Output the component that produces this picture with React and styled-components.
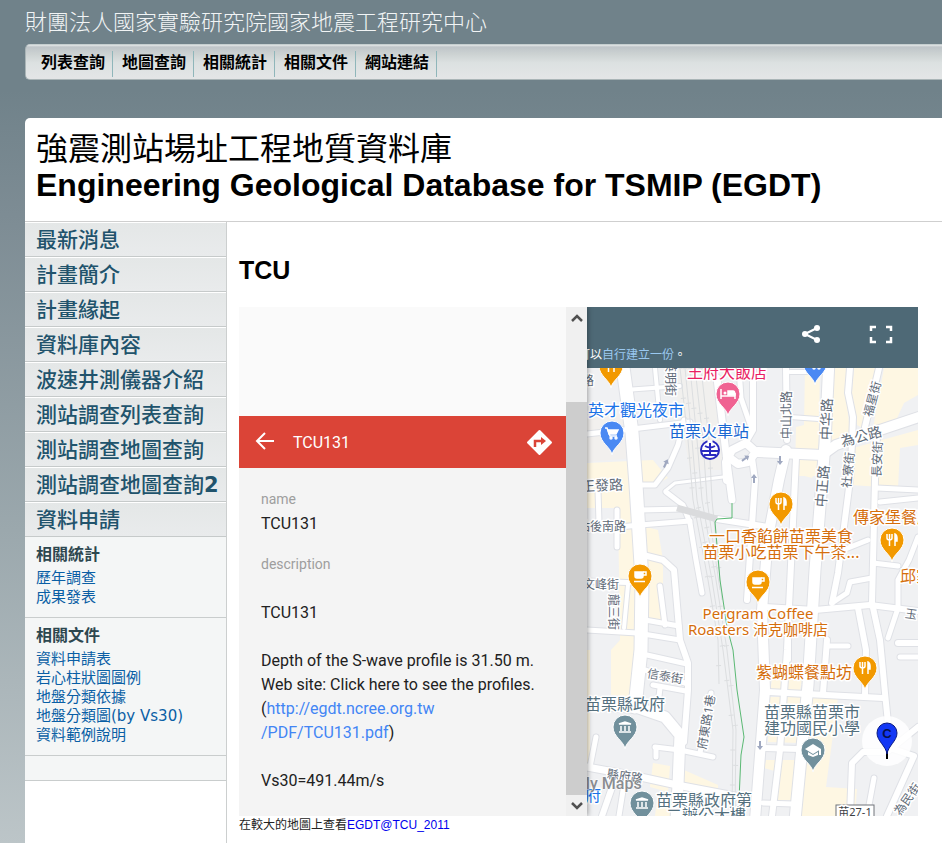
import React from "react";
import styled, { createGlobalStyle } from "styled-components";

const cjk = `"Liberation Sans", "Noto Sans CJK TC", sans-serif`;
const verdana = `"DejaVu Sans", "Noto Sans CJK TC", sans-serif`;
const roboto = `Roboto, "Noto Sans CJK TC", sans-serif`;

const GlobalStyle = createGlobalStyle`
  * { box-sizing: border-box; }
  html { background: #bcc5c8; }
  body {
    margin: 0;
    font-family: ${cjk};
    background: linear-gradient(#70828a 0, #70828a 90px, #7d8c94 215px, #9ba8ad 530px, #bcc5c8 843px);
  }
  h1, h2, h3, p, ul, dl { margin: 0; padding: 0; }
  ul { list-style: none; }
  a { text-decoration: none; }
  button { border: 0; padding: 0; background: none; cursor: pointer; }
`;

const Page = styled.div`
  min-height: 100vh;
  padding-left: 25px;
  display: flex;
  flex-direction: column;
  overflow: hidden;
`;

const Organisation = styled.p`
  padding-top: 7px;
  height: 44px;
  font-size: 22px;
  line-height: 32px;
  font-weight: 300;
  color: #f1f4f5;
  white-space: nowrap;
`;

const TopNav = styled.nav`
  height: 36px;
  padding: 6px 0 0 6px;
  border: 1px solid #aab5b7;
  border-top-color: #c6cfd0;
  border-right: 0;
  border-radius: 5px 0 0 5px;
  background: linear-gradient(#e4e8e8 0, #bfc5c9 2px, #ccd2d2 9px, #dce1e1 18px, #e3e5e6 32px);
`;

const TopList = styled.ul`
  display: flex;
`;

const TopItem = styled.li`
  width: 81px;
  height: 26px;
  padding-left: 9px;
  border-right: 1px solid #8fb6ba;
`;

const TopLink = styled.a`
  font-size: 16px;
  line-height: 24px;
  font-weight: 700;
  color: #000;
  white-space: nowrap;
`;

const Sheet = styled.div`
  flex: 1;
  display: flex;
  flex-direction: column;
  margin-top: 38px;
  background: #fff;
  border-top-left-radius: 5px;
`;

const Masthead = styled.header`
  padding: 13px 11px 18px;
  border-bottom: 1px solid #cfcfcf;
  color: #000;
  white-space: nowrap;
`;

const Title = styled.h1`
  font-size: 32px;
  line-height: 36px;
  font-weight: 700;
`;

const TitleNative = styled.span`
  display: block;
  font-weight: 400;
`;

const Columns = styled.div`
  flex: 1;
  display: grid;
  grid-template-columns: 202px minmax(0, 1fr);
`;

const Sidebar = styled.aside`
  border-right: 1px solid #cccfcf;
  font-family: ${verdana};
`;

const MenuItem = styled.li`
  height: 35px;
  padding-left: 11px;
  border-top: 1px solid #fff;
  border-bottom: 1px solid #c6caca;
  background: linear-gradient(#e4e7e7, #e9ebec);
`;

const MenuLink = styled.a`
  font-size: 21px;
  line-height: 35px;
  font-weight: 500;
  color: #21536c;
  white-space: nowrap;
`;

const Section = styled.section`
  min-height: 25px;
  padding: ${(p) => (p.$blank ? "0" : "6px 11px 10px")};
  border-bottom: 1px solid #c9cdcd;
  background: #f4f6f6;
`;

const SectionTitle = styled.h3`
  margin-bottom: 2px;
  font-size: 16px;
  line-height: 24px;
  color: #2d474f;
`;

const SectionItem = styled.li`
  font-size: 15px;
  line-height: 19px;
  white-space: nowrap;
`;

const SectionLink = styled.a`
  color: #0a5fa5;
`;

const Main = styled.main`
  padding: 33px 24px 10px 12px;
`;

const StationTitle = styled.h2`
  margin-bottom: 22px;
  font-size: 25px;
  line-height: 30px;
`;

const Embed = styled.div`
  position: relative;
  display: flex;
  flex-direction: column;
  height: 509px;
  overflow: hidden;
  font-family: ${roboto};
`;

const MapBar = styled.div`
  flex: none;
  height: 61px;
  padding: 0 25px 0 339px;
  display: flex;
  justify-content: space-between;
  background: #4e6976;
  color: #fff;
`;

const Notice = styled.p`
  align-self: flex-end;
  font-size: 12px;
  line-height: 26px;
  white-space: nowrap;
`;

const NoticeLink = styled.a`
  color: #9ac8f0;
`;

const MapTools = styled.div`
  display: flex;
  gap: 46px;
  padding-top: 15px;
`;

const ToolButton = styled.button`
  width: 24px;
  height: 24px;
  color: #fff;
`;

const MapCanvas = styled.svg`
  display: block;
  flex: 1;
  width: 100%;
  min-height: 0;
  background: #f0f1f3;
`;

const Panel = styled.div`
  position: absolute;
  inset: 0 auto 0 0;
  width: 348px;
  display: grid;
  grid-template-columns: 1fr 21px;
  box-shadow: 1px 0 5px rgba(0, 0, 0, 0.35);
`;

const Card = styled.div`
  display: flex;
  flex-direction: column;
  padding-top: 109px;
  background: #fafafa;
`;

const CardHeader = styled.div`
  display: flex;
  align-items: center;
  height: 52px;
  padding: 0 13px 0 14px;
  gap: 16px;
  background: #db4437;
  color: #fff;
  font-size: 16px;
`;

const CardTitle = styled.span`
  flex: 1;
`;

const IconButton = styled.button`
  width: ${(p) => p.$size}px;
  height: ${(p) => p.$size}px;
  color: #fff;
`;

const Fields = styled.dl`
  flex: 1;
  padding: 21px 22px 0;
  background: #f4f4f4;
  color: #212121;
`;

const FieldName = styled.dt`
  margin-bottom: 3px;
  font-size: 14px;
  line-height: 20px;
  color: #9e9e9e;
`;

const FieldValue = styled.dd`
  margin: 0 0 18px;
  font-size: 16px;
  line-height: 24px;
  white-space: pre-line;
`;

const FieldLink = styled.a`
  color: #4285f4;
`;

const Scrollbar = styled.div`
  display: flex;
  flex-direction: column;
  background: #f0f0f0;
`;

const ScrollButton = styled.button`
  height: 21px;
  display: grid;
  place-items: center;
`;

const Thumb = styled.div`
  flex: 1;
  margin-top: 74px;
  background: #cdcdcd;
`;

const Caption = styled.p`
  font-size: 12px;
  line-height: 18px;
  color: #222;
`;

const CaptionLink = styled.a`
  color: #0000ee;
`;

const Icon = styled.svg`
  display: block;
`;

const Halo = styled.text`
  font-family: "Noto Sans", "Noto Sans CJK TC", sans-serif;
  font-size: ${(p) => p.$size || 16}px;
  fill: ${(p) => p.$color || "#5f6b78"};
  stroke: #fff;
  stroke-width: 3px;
  stroke-linejoin: round;
  paint-order: stroke;
  text-anchor: ${(p) => p.$anchor || "start"};
`;

const Watermark = styled.text`
  font-family: ${roboto};
  font-size: 16px;
  font-weight: 500;
  fill: #8a8d91;
  stroke: #fff;
  stroke-width: 1px;
  paint-order: stroke;
`;

const topLinks = ["列表查詢", "地圖查詢", "相關統計", "相關文件", "網站連結"];
const menu = [
  "最新消息", "計畫簡介", "計畫緣起", "資料庫內容", "波速井測儀器介紹",
  "測站調查列表查詢", "測站調查地圖查詢", "測站調查地圖查詢2", "資料申請",
];
const sections = [
  { title: "相關統計", links: ["歷年調查", "成果發表"] },
  { title: "相關文件", links: ["資料申請表", "岩心柱狀圖圖例", "地盤分類依據", "地盤分類圖(by Vs30)", "資料範例說明"] },
];

const blocks = [
  "587,463 653,460 668,478 655,485 634,486 636,508 587,508",
  "618,508 636,508 641,560 641,640 634,697 611,695 611,650 620,640",
  "646,527 658,530 663,560 663,627 646,622",
  "653,763 670,766 668,792 650,787",
  "684,770 718,785 718,792 684,788",
  "657,800 672,800 670,816 655,816",
  "587,650 590,650 590,770 587,770",
  "805,368 820,368 818,476 795,476 796,427 804,425",
  "833,368 849,368 846,395 850,432 831,444",
  "854,368 876,368 862,428 857,425 852,393",
  "884,368 918,368 918,395 904,403 893,427 873,428",
  "853,448 918,430 918,445 900,448 898,488 850,485",
  "797,470 816,470 812,478 797,474",
  "772,680 802,680 800,690 770,690",
  "770,697 802,697 800,743 768,742",
  "766,760 798,760 794,800 778,800 778,772 764,768",
  "812,697 838,697 826,787 857,789 855,816 800,816",
];

const minorRoads = [
  [5, "587,434 632,429 690,422"],
  [4, "625,390 680,386"], [4, "628,409 660,407"], [4, "655,368 660,420"],
  [5, "587,530 640,525 690,521"],
  [5, "640,510 685,509"], [5, "617,510 617,547"], [5, "598,490 599,523"],
  [5, "587,581 640,583"], [4, "628,585 624,628"],
  [5, "587,630 637,633 680,640"],
  [5, "645,620 679,626"], [5, "660,586 665,625"],
  [6, "643,555 663,560 674,570 680,640 688,663 688,690 684,742"],
  [5, "633,485 655,485 668,468 678,445 684,420"],
  [3, "665,491 675,483 723,477"], [5, "666,492 683,505 690,523 696,560 702,593"],
  [5, "647,655 687,664"], [5, "645,670 688,684"], [5, "653,685 686,691"], [5, "660,688 658,705"],
  [5, "655,747 680,750 713,757"], [5, "656,748 656,757"], [5, "711,693 700,753"],
  [7, "587,767 636,776 677,785 740,797"],
  [5, "596,737 590,767"], [6, "616,776 602,816"], [5, "625,778 619,816"],
  [7, "717,378 728,470 732,500"], [6, "717,519 768,527"],
  [8, "727,480 726,462 732,450 746,443 756,452 748,462 738,464 727,456"],
  [6, "752,458 755,480 747,600"],
  [5, "739,368 741,398 752,430"], [6, "753,368 753,430 746,442"],
  [6, "786,368 787,440"], [4, "790,372 806,372"], [4, "790,417 818,419"],
  [6, "796,458 787,650 780,750 772,816"],
  [6, "850,368 848,393 853,417 852,443 850,480 838,573 832,603"],
  [6, "879,368 865,427"],
  [6, "877,434 875,480 872,603 880,640 885,693 888,723 897,742"],
  [5, "877,488 918,490"], [5, "880,502 918,498"],
  [5, "868,540 843,550"], [5, "873,563 898,566"],
  [5, "832,603 847,593 850,582 872,578"],
  [5, "918,537 909,560 898,580 898,608 888,638"],
  [6, "765,607 815,610 870,605 918,611"],
  [6, "858,608 866,650 865,695"], [6, "898,643 918,643"], [5, "900,657 918,657"],
  [6, "827,640 823,693"], [5, "828,646 848,646"], [4, "789,640 789,660"],
  [6, "768,692 883,698"], [6, "764,748 800,749"],
  [5, "763,803 793,804"],
  [6, "850,816 852,763 863,752 887,752 918,727"],
  [6, "890,748 914,756 887,816"], [5, "874,778 867,816"],
];

const majorRoads = [
  [13, "622,360 632,433 636,485 642,580 641,650 635,707"],
  [11, "636,707 665,717 680,735 678,785 676,820"],
  [10, "587,704 636,708"],
  [10, "758,452 822,455 836,445 877,431 925,415"],
  [11, "829,360 825,443 815,570 808,685 795,820"],
  [10, "786,450 779,480 768,537 762,610 765,690 755,820"],
];

const Roads = () => (
  <g fill="none" strokeLinecap="round" strokeLinejoin="round">
    <g stroke="#dfe1e6">
      {[...minorRoads, ...majorRoads].map(([w, pts], i) => (
        <polyline key={i} points={pts} strokeWidth={w + 2} />
      ))}
    </g>
    <g stroke="#fff">
      {[...minorRoads, ...majorRoads].map(([w, pts], i) => (
        <polyline key={i} points={pts} strokeWidth={w} />
      ))}
    </g>
  </g>
);

const rails = [
  "680,368 688,440 693,500 708,580 718,640 719,684",
  "685,368 692,440 697,500 712,580 723,650 733,730 732,816",
  "690,368 697,440 702,500 716,580 727,650 736,730 735,816",
  "695,368 703,440 707,500 720,590",
  "701,368 709,440 712,500 722,600",
];

const Rails = () => (
  <g fill="none" stroke="#dcdee0">
    {rails.map((pts, i) => (
      <g key={i}>
        <polyline points={pts} strokeWidth="1" />
        <polyline points={pts} strokeWidth="5" strokeDasharray={`1 ${29 + i * 5}`} />
      </g>
    ))}
  </g>
);

const glyphs = {
  food: (
    <g fill="none" stroke="#fff" strokeWidth="1.5">
      <path d="M-5 -6v4q0 2 2.500 2t2.500 -2v-4M-2.500 -6V6" />
      <path d="M3 6V-6q2.500 1 2 7H3" fill="#fff" />
    </g>
  ),
  cup: (
    <g fill="none" stroke="#fff" strokeWidth="1.5">
      <path d="M-5 -4H3V0q0 2 -2 2H-3q-2 0 -2 -2Z" fill="#fff" />
      <path d="M3 -4H6V-1H3M-6 5.500H5" />
    </g>
  ),
  cart: (
    <g fill="none" stroke="#fff" strokeWidth="1.5">
      <path d="M-7 -5H-5L-2 3H5" />
      <path d="M-4 -3H6L4 1H-3Z" fill="#fff" />
      <circle cx="-1" cy="5" r="1" /><circle cx="4" cy="5" r="1" />
    </g>
  ),
  bed: (
    <g fill="none" stroke="#fff" strokeWidth="1.5">
      <path d="M-7 -5V5M-7 2H7V5M7 2V-1" />
      <path d="M0 -3H5Q7 -3 7 1H0Z" fill="#fff" />
      <circle cx="-3" cy="-1" r="1.5" fill="#fff" stroke="none" />
    </g>
  ),
  civic: (
    <g fill="none" stroke="#fff" strokeWidth="1.5">
      <path d="M-6 -3L0 -5L6 -3Z" fill="#fff" />
      <path d="M-4 -1V4M0 -1V4M4 -1V4M-6 5H6" />
    </g>
  ),
  school: (
    <g fill="#fff">
      <path d="M-8 -1L0 -6L8 -1L0 4Z" />
      <path d="M-5 2V5L0 7L5 5V2L0 5Z" />
      <path d="M6 -1H8V5H6Z" />
    </g>
  ),
};

const pins = [
  [611, 366, "#f29900", "food"], [815, 363, "#4a89f3", "cart"], [728, 394, "#f06292", "bed"],
  [612, 433, "#4a89f3", "cart"], [781, 504, "#f29900", "food"], [892, 540, "#f29900", "food"],
  [865, 668, "#f29900", "food"], [640, 576, "#f29900", "cup"], [758, 582, "#f29900", "cup"],
  [625, 727, "#71909c", "civic"], [642, 803, "#71909c", "civic"], [813, 750, "#71909c", "school"],
];

const Pin = ({ x, y, color, kind }) => (
  <g transform={`translate(${x} ${y})`}>
    <path
      d="M0 22C-1 14 -12 10 -12 0A12 12 0 0 1 12 0C12 10 1 14 0 22Z"
      fill={color} stroke="#fff" strokeWidth="1"
    />
    {glyphs[kind]}
  </g>
);

const streets = [
  ["英明街", 670, 378, 90, 12], ["中山北路", 786, 415, -90, 12], ["中华路", 826, 419, -88, 14],
  ["中正路", 822, 486, -85, 14], ["福星街", 872, 399, -75, 12], ["長安街", 877, 459, -88, 12],
  ["社寮街", 848, 470, -84, 12], ["為公路", 861, 436, -15, 14], ["正發路", 602, 485, -3, 14],
  ["站後南路", 602, 526, 0, 12], ["文峰街", 601, 584, 0, 12], ["龍三街", 613, 612, 90, 12],
  ["信泰街", 665, 676, 10, 12], ["府東路1巷", 706, 722, -80, 12], ["縣府路", 625, 776, 8, 12],
  ["為民街", 907, 799, -55, 12], ["路", 588, 380, 0, 12], ["玉", 911, 614, 8, 12],
];

const orange = "#d56e0c";
const slate = "#54707e";
const blue = "#1a73e8";
const places = [
  ["英才觀光夜市", 636, 416, blue, "middle"],
  ["王府大飯店", 727, 378, "#e91e63", "middle"],
  ["苗栗火車站", 709, 437, "#1967d2", "middle"],
  ["一口香餡餅苗栗美食", 781, 542, orange, "middle"],
  ["苗栗小吃苗栗下午茶...", 781, 558, orange, "middle"],
  ["Pergram Coffee", 758, 619, orange, "middle"],
  ["Roasters 沛克咖啡店", 758, 635, orange, "middle"],
  ["傳家堡餐廳", 853, 523, orange],
  ["邱家", 900, 582, orange],
  ["紫蝴蝶餐點坊", 756, 678, orange],
  ["苗栗縣政府", 585, 710, slate],
  ["苗栗縣苗栗市", 812, 718, slate, "middle"],
  ["建功國民小學", 812, 734, slate, "middle"],
  ["苗栗縣政府第", 656, 806, slate],
  ["二辦公大樓", 666, 821, slate],
  ["府", 585, 801, blue],
];

const arrows = [[780, 461, 0], [754, 478, 180], [746, 458, 235], [666, 463, 205], [760, 746, 0]];

const StationMap = () => (
  <MapCanvas viewBox="239 368 679 448" preserveAspectRatio="xMinYMin slice" role="img" aria-label="地圖">
    <polygon points="587,416 628,412 632,458 587,462" fill="#f2f0ee" />
    <polygon points="672,368 716,368 724,470 690,470" fill="#f1f0ee" />
    {blocks.map((pts) => <polygon key={pts} points={pts} fill="#fef7e3" />)}
    <Roads />
    <Rails />
    <path d="M677 508L717 519" stroke="#dadbdd" strokeWidth="7" />
    <polyline
      points="732,503 732,518 717,519 715,522 720,580 727,627 733,650 737,690 744,737 741,755 739,800"
      fill="none" stroke="#5bb974" strokeWidth="1"
    />
    {arrows.map(([x, y, r]) => (
      <path key={`${x}-${y}`} transform={`translate(${x} ${y}) rotate(${r})`} d="M-1 -5H1V0H3L0 4L-3 0H-1Z" fill="#9fa8c0" />
    ))}
    {streets.map(([name, x, y, r, size]) => (
      <Halo key={name} $size={size} $anchor="middle" dominantBaseline="central" transform={`translate(${x} ${y}) rotate(${r})`}>
        {name}
      </Halo>
    ))}
    {pins.map(([x, y, color, kind]) => <Pin key={`${x}-${y}`} x={x} y={y} color={color} kind={kind} />)}
    <g transform="translate(710 450)" fill="none" stroke="#2a2ac0" strokeWidth="2">
      <circle r="9" fill="#fff" />
      <path d="M0 -10V-6" stroke="#fff" strokeWidth="5" />
      <path d="M-5 -4Q0 -1 5 -4M-9 1H9M-6 5H6M0 -7V5" />
    </g>
    {places.map(([name, x, y, color, anchor]) => (
      <Halo key={name} x={x} y={y} $color={color} $anchor={anchor} $size={/^[A-Z]/.test(name) ? 15 : 16}>{name}</Halo>
    ))}
    <rect x="836" y="805" width="38" height="14" fill="#fff" stroke="#70757a" />
    <Halo x="855" y="816" $size={11} $anchor="middle" $color="#3c4043">苗27-1</Halo>
    <Watermark x="576" y="789">My Maps</Watermark>
    <circle cx="887" cy="741" r="25" fill="#fff" fillOpacity="0.85" />
    <path d="M887 746V759" stroke="#000" strokeWidth="2" />
    <path d="M887 754C886 746 877 741 877 733A10 10 0 0 1 897 733C897 741 888 746 887 754Z" fill="#1338f5" stroke="#0a1a80" />
    <text x="887" y="738" textAnchor="middle" fontFamily="Liberation Sans" fontSize="13" fontWeight="700" fill="#06104a">C</text>
  </MapCanvas>
);

const Chevron = ({ d }) => (
  <Icon width="12" height="8" viewBox="0 0 12 8" fill="none" stroke="#505050" strokeWidth="2.5">
    <path d={d} />
  </Icon>
);

export default function App() {
  return (
    <Page>
      <GlobalStyle />
      <Organisation>財團法人國家實驗研究院國家地震工程研究中心</Organisation>
      <TopNav>
        <TopList>
          {topLinks.map((t) => <TopItem key={t}><TopLink href="#">{t}</TopLink></TopItem>)}
        </TopList>
      </TopNav>
      <Sheet>
        <Masthead>
          <Title>
            <TitleNative>強震測站場址工程地質資料庫</TitleNative>
            Engineering Geological Database for TSMIP (EGDT)
          </Title>
        </Masthead>
        <Columns>
          <Sidebar>
            <ul>
              {menu.map((t) => (
                <MenuItem key={t}>
                  <MenuLink href="#">{t.replace("2", "")}{t.endsWith("2") && <b>2</b>}</MenuLink>
                </MenuItem>
              ))}
            </ul>
            {sections.map((s) => (
              <Section key={s.title}>
                <SectionTitle>{s.title}</SectionTitle>
                <ul>
                  {s.links.map((t) => <SectionItem key={t}><SectionLink href="#">{t}</SectionLink></SectionItem>)}
                </ul>
              </Section>
            ))}
            <Section $blank />
          </Sidebar>
          <Main>
            <StationTitle>TCU</StationTitle>
            <Embed>
              <MapBar>
                <Notice>可以<NoticeLink href="#">自行建立一份</NoticeLink>。</Notice>
                <MapTools>
                  <ToolButton aria-label="分享">
                    <Icon width="24" height="24" viewBox="0 0 24 24" fill="currentColor">
                      <path d="M6 12L18 6M6 12L18 18" stroke="currentColor" strokeWidth="2" />
                      <circle cx="6" cy="12" r="3" /><circle cx="18" cy="6" r="3" /><circle cx="18" cy="18" r="3" />
                    </Icon>
                  </ToolButton>
                  <ToolButton aria-label="全螢幕">
                    <Icon width="24" height="24" viewBox="0 0 24 24" fill="none" stroke="currentColor" strokeWidth="2.5">
                      <path d="M2 9V5H7M17 5H22V9M22 15V20H17M7 20H2V15" />
                    </Icon>
                  </ToolButton>
                </MapTools>
              </MapBar>
              <StationMap />
              <Panel>
                <Card>
                  <CardHeader>
                    <IconButton $size={24} aria-label="返回">
                      <Icon width="24" height="24" viewBox="0 0 24 24" fill="none" stroke="currentColor" strokeWidth="2">
                        <path d="M21 11H4M12 3L4 11L12 19" />
                      </Icon>
                    </IconButton>
                    <CardTitle>TCU131</CardTitle>
                    <IconButton $size={27} aria-label="路線">
                      <Icon width="27" height="27" viewBox="0 0 27 27">
                        <path d="M13.500 2L25 13.500L13.500 25L2 13.500Z" fill="#fff" stroke="#fff" strokeWidth="2" strokeLinejoin="round" />
                        <path d="M9 18V12H16" fill="none" stroke="#db4437" strokeWidth="2.5" />
                        <path d="M15 8L20 12L15 16Z" fill="#db4437" />
                      </Icon>
                    </IconButton>
                  </CardHeader>
                  <Fields>
                    <FieldName>name</FieldName>
                    <FieldValue>TCU131</FieldValue>
                    <FieldName>description</FieldName>
                    <FieldValue>
                      {"\nTCU131\n\nDepth of the S-wave profile is 31.50 m.\nWeb site: Click here to see the profiles.\n("}
                      <FieldLink href="#">{"http://egdt.ncree.org.tw\n/PDF/TCU131.pdf"}</FieldLink>
                      {")\n\nVs30=491.44m/s"}
                    </FieldValue>
                  </Fields>
                </Card>
                <Scrollbar>
                  <ScrollButton aria-label="向上捲動"><Chevron d="M1 7L6 2L11 7" /></ScrollButton>
                  <Thumb />
                  <ScrollButton aria-label="向下捲動"><Chevron d="M1 1L6 6L11 1" /></ScrollButton>
                </Scrollbar>
              </Panel>
            </Embed>
            <Caption>在較大的地圖上查看<CaptionLink href="#">EGDT@TCU_2011</CaptionLink></Caption>
          </Main>
        </Columns>
      </Sheet>
    </Page>
  );
}
